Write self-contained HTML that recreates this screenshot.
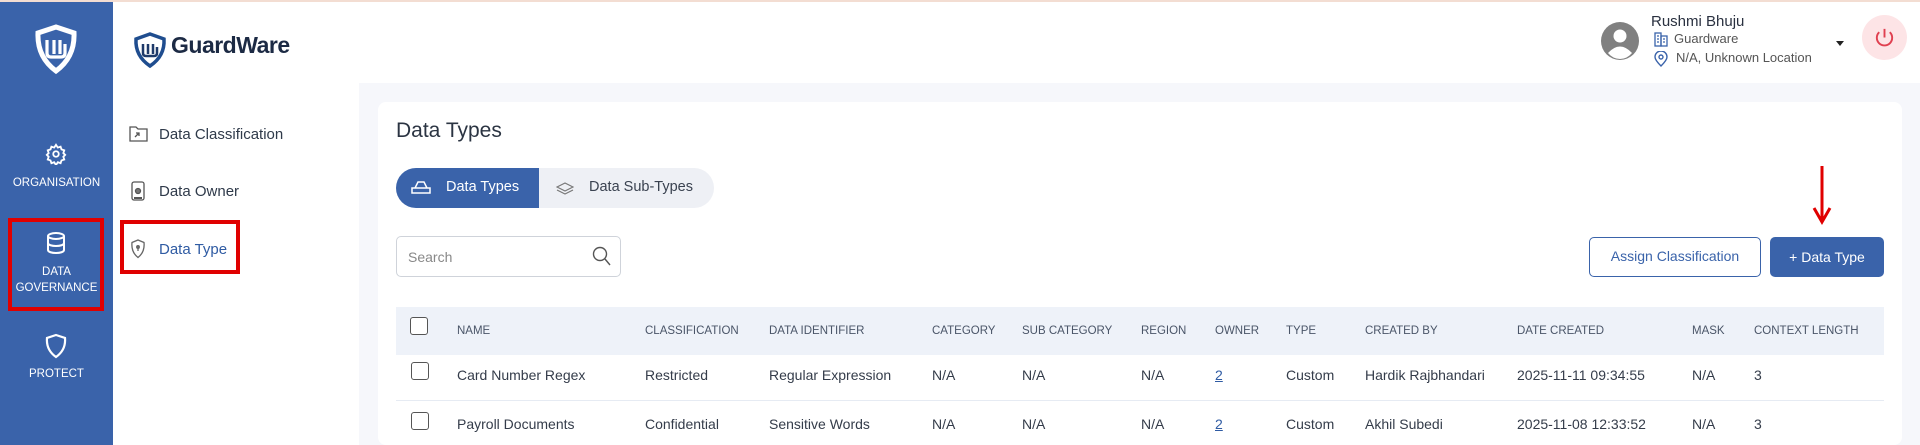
<!DOCTYPE html>
<html><head><meta charset="utf-8"><style>
*{box-sizing:border-box;margin:0;padding:0}
body{width:1920px;height:445px;overflow:hidden;background:#fff;font-family:"Liberation Sans",sans-serif;position:relative;color:#2f3a4a}
.abs{position:absolute}
.topline{left:0;top:0;width:1920px;height:2px;background:#f3ddd2}
.side{left:0;top:2px;width:113px;height:443px;background:#3a63aa}
.sl{color:#fff;font-size:11.5px;text-align:center;width:113px;left:0}
.gray{left:359px;top:83px;width:1561px;height:362px;background:#f6f7fb}
.card{left:378px;top:102px;width:1524px;height:343px;background:#fff;border-radius:8px}
.sub{font-size:15px;color:#2f3a4a}
.th{font-size:11.5px;color:#4a5568;top:325px}
.td{font-size:14px;color:#343c4a}
.cb{width:18px;height:18px;border:1.5px solid #555;border-radius:3px;background:#fff}
</style></head><body>
<div class="abs topline"></div>
<div class="abs side"></div>
<svg class="abs" style="left:33px;top:24px" width="46" height="50" viewBox="0 0 46 50"><path d="M23 3 L41 9 Q42 33 23 47 Q4 33 5 9 Z" fill="none" stroke="#fff" stroke-width="5"/><path d="M14 16 v13 q0 4 4 4 h10 q4 0 4-4 v-9 M21 16 v14 M27 16 v14" fill="none" stroke="#fff" stroke-width="3.2"/></svg>
<svg class="abs" style="left:45px;top:143px" width="22" height="22" viewBox="0 0 24 24" fill="none" stroke="#fff" stroke-width="2"><circle cx="12" cy="12" r="3"/><path d="M12 2l2 3 3-1 1 3 3 1-1 3 2 2-2 2 1 3-3 1-1 3-3-1-2 3-2-3-3 1-1-3-3-1 1-3-2-2 2-2-1-3 3-1 1-3 3 1z"/></svg>
<div class="abs sl" style="top:177px">ORGANISATION</div>
<div class="abs" style="left:8px;top:218px;width:96px;height:93px;border:4px solid #e00000"></div>
<svg class="abs" style="left:45px;top:231px" width="22" height="24" viewBox="0 0 22 24" fill="none" stroke="#fff" stroke-width="2"><ellipse cx="11" cy="5" rx="8" ry="3"/><path d="M3 5v14c0 2 4 3 8 3s8-1 8-3V5M3 12c0 2 4 3 8 3s8-1 8-3"/></svg>
<div class="abs sl" style="top:264px;line-height:16px">DATA<br>GOVERNANCE</div>
<svg class="abs" style="left:45px;top:333px" width="22" height="26" viewBox="0 0 22 26" fill="none" stroke="#fff" stroke-width="2.2"><path d="M11 2 L20 5 Q21 17 11 24 Q1 17 2 5 Z"/></svg>
<div class="abs sl" style="top:368px">PROTECT</div>
<svg class="abs" style="left:133px;top:31px" width="34" height="38" viewBox="0 0 34 38"><path d="M17 3 L31 8 Q32 25 17 35 Q2 25 3 8 Z" fill="none" stroke="#1f4d8f" stroke-width="3.5"/><path d="M10 13 v9 q0 3 3 3 h8 q3 0 3-3 v-6 M15 13 v10 M20 13 v10" fill="none" stroke="#1f3a6a" stroke-width="2.5"/></svg>
<div class="abs" style="left:171px;top:32px;font-size:23px;font-weight:bold;color:#1c2a44;letter-spacing:-0.5px">GuardWare</div>
<svg class="abs" style="left:129px;top:125px" width="19" height="17" viewBox="0 0 19 17" fill="none" stroke="#555" stroke-width="1.3"><path d="M1 2h6l2 2h9v12H1z"/><path d="M6 12l4-4M7 8h3v3"/></svg>
<div class="abs sub" style="left:159px;top:126px">Data Classification</div>
<svg class="abs" style="left:131px;top:181px" width="14" height="20" viewBox="0 0 14 20" fill="none" stroke="#555" stroke-width="1.3"><rect x="1" y="1" width="12" height="18" rx="2"/><circle cx="7" cy="10" r="2.5" fill="#777"/><path d="M3 17h8" stroke-width="2"/></svg>
<div class="abs sub" style="left:159px;top:183px">Data Owner</div>
<div class="abs" style="left:120px;top:220px;width:120px;height:54px;border:4px solid #e00000"></div>
<svg class="abs" style="left:130px;top:239px" width="16" height="20" viewBox="0 0 16 20" fill="none" stroke="#666" stroke-width="1.3"><path d="M8 1l6 2.5Q15 13 8 18.5Q1 13 2 3.5Z"/><circle cx="8" cy="8" r="1.3" fill="#666"/><path d="M8 9v3"/></svg>
<div class="abs sub" style="left:159px;top:241px;color:#2f5ba3">Data Type</div>
<svg class="abs" style="left:1601px;top:22px" width="38" height="38" viewBox="0 0 38 38"><circle cx="19" cy="19" r="19" fill="#808080"/><circle cx="19" cy="14" r="6.5" fill="#fff"/><path d="M7 31q12-13 24 0q-5 6-12 6t-12-6z" fill="#fff"/></svg>
<div class="abs" style="left:1651px;top:13px;font-size:15px;color:#2a3140">Rushmi Bhuju</div>
<svg class="abs" style="left:1654px;top:32px" width="14" height="15" viewBox="0 0 14 15" fill="none" stroke="#3a63aa" stroke-width="1.3"><rect x="1" y="1" width="6" height="13"/><rect x="7" y="4" width="6" height="10"/><path d="M3 4h2M3 7h2M3 10h2M9 7h2M9 10h2"/></svg>
<div class="abs" style="left:1674px;top:31px;font-size:13px;color:#555">Guardware</div>
<svg class="abs" style="left:1654px;top:51px" width="14" height="16" viewBox="0 0 14 16" fill="none" stroke="#3a63aa" stroke-width="1.4"><path d="M7 15Q1 9 1 6a6 6 0 0112 0q0 3-6 9z"/><circle cx="7" cy="6" r="2"/></svg>
<div class="abs" style="left:1676px;top:50px;font-size:13px;color:#555">N/A, Unknown Location</div>
<div class="abs" style="left:1836px;top:41px;border-left:4px solid transparent;border-right:4px solid transparent;border-top:5px solid #222"></div>
<div class="abs" style="left:1862px;top:15px;width:45px;height:45px;border-radius:50%;background:#fde4e6"></div>
<svg class="abs" style="left:1873px;top:26px" width="23" height="23" viewBox="0 0 24 24" fill="none" stroke="#e04050" stroke-width="2"><path d="M12 3v9"/><path d="M6.5 6.5a8 8 0 1011 0"/></svg>
<div class="abs gray"></div>
<div class="abs card"></div>
<div class="abs" style="left:396px;top:119px;font-size:21px;color:#2b3442">Data Types</div>
<div class="abs" style="left:396px;top:168px;width:318px;height:40px;border-radius:20px;background:#eef0f5"></div>
<div class="abs" style="left:396px;top:168px;width:143px;height:40px;border-radius:20px 0 0 20px;background:#3a63aa"></div>
<svg class="abs" style="left:411px;top:181px" width="20" height="14" viewBox="0 0 20 14" fill="none" stroke="#fff" stroke-width="1.5"><path d="M4 7L7 1h6l3 6M1 7h18v5H1z"/></svg>
<div class="abs" style="left:446px;top:179px;font-size:14.5px;color:#fff">Data Types</div>
<svg class="abs" style="left:556px;top:181px" width="18" height="14" viewBox="0 0 18 14" fill="none" stroke="#777" stroke-width="1.2"><path d="M9 2l8 4-8 4-8-4z"/><path d="M1 9l8 4 8-4"/></svg>
<div class="abs" style="left:589px;top:179px;font-size:14.5px;color:#3a4250">Data Sub-Types</div>
<div class="abs" style="left:396px;top:236px;width:225px;height:41px;border:1px solid #cfd3da;border-radius:5px"></div>
<div class="abs" style="left:408px;top:249px;font-size:14px;color:#888">Search</div>
<svg class="abs" style="left:592px;top:246px" width="19" height="20" viewBox="0 0 19 20" fill="none" stroke="#555" stroke-width="1.4"><circle cx="8" cy="8" r="6.5"/><path d="M13 13l5 6"/></svg>
<div class="abs" style="left:1589px;top:237px;width:172px;height:40px;border:1.5px solid #3a63aa;border-radius:5px;color:#3a63aa;font-size:14px;text-align:center;line-height:37px">Assign Classification</div>
<div class="abs" style="left:1770px;top:237px;width:114px;height:40px;background:#3a63aa;border-radius:5px;color:#fff;font-size:14px;text-align:center;line-height:40px">+ Data Type</div>
<svg class="abs" style="left:1810px;top:164px" width="24" height="62" viewBox="0 0 24 62" fill="none" stroke="#e00000" stroke-width="3"><path d="M12 2v55M4 44l8 14 8-14"/></svg>
<div class="abs" style="left:396px;top:307px;width:1488px;height:48px;background:#eef2f9"></div>
<div class="abs cb" style="left:410px;top:317px"></div>
<div class="abs th" style="left:457px">NAME</div>
<div class="abs th" style="left:645px">CLASSIFICATION</div>
<div class="abs th" style="left:769px">DATA IDENTIFIER</div>
<div class="abs th" style="left:932px">CATEGORY</div>
<div class="abs th" style="left:1022px">SUB CATEGORY</div>
<div class="abs th" style="left:1141px">REGION</div>
<div class="abs th" style="left:1215px">OWNER</div>
<div class="abs th" style="left:1286px">TYPE</div>
<div class="abs th" style="left:1365px">CREATED BY</div>
<div class="abs th" style="left:1517px">DATE CREATED</div>
<div class="abs th" style="left:1692px">MASK</div>
<div class="abs th" style="left:1754px">CONTEXT LENGTH</div>
<div class="abs" style="left:396px;top:400px;width:1488px;height:1px;background:#e6ebf3"></div>
<div class="abs cb" style="left:411px;top:362px"></div>
<div class="abs cb" style="left:411px;top:412px"></div>
<div class="abs" style="top:367px;left:0;width:1920px">
<div class="abs td" style="left:457px">Card Number Regex</div><div class="abs td" style="left:645px">Restricted</div><div class="abs td" style="left:769px">Regular Expression</div><div class="abs td" style="left:932px">N/A</div><div class="abs td" style="left:1022px">N/A</div><div class="abs td" style="left:1141px">N/A</div><div class="abs td" style="left:1215px;color:#2f5ba3;text-decoration:underline">2</div><div class="abs td" style="left:1286px">Custom</div><div class="abs td" style="left:1365px">Hardik Rajbhandari</div><div class="abs td" style="left:1517px">2025-11-11 09:34:55</div><div class="abs td" style="left:1692px">N/A</div><div class="abs td" style="left:1754px">3</div>
</div>
<div class="abs" style="top:416px;left:0;width:1920px">
<div class="abs td" style="left:457px">Payroll Documents</div><div class="abs td" style="left:645px">Confidential</div><div class="abs td" style="left:769px">Sensitive Words</div><div class="abs td" style="left:932px">N/A</div><div class="abs td" style="left:1022px">N/A</div><div class="abs td" style="left:1141px">N/A</div><div class="abs td" style="left:1215px;color:#2f5ba3;text-decoration:underline">2</div><div class="abs td" style="left:1286px">Custom</div><div class="abs td" style="left:1365px">Akhil Subedi</div><div class="abs td" style="left:1517px">2025-11-08 12:33:52</div><div class="abs td" style="left:1692px">N/A</div><div class="abs td" style="left:1754px">3</div>
</div>
</body></html>
